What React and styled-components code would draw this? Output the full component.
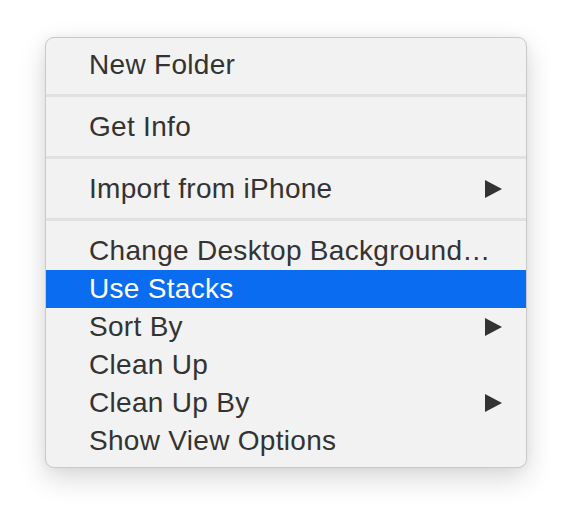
import styled, { createGlobalStyle } from "styled-components";

const GlobalStyle = createGlobalStyle`
  html, body {
    margin: 0;
    background: #ffffff;
  }
`;

const sections = [
  [{ label: "New Folder" }],
  [{ label: "Get Info" }],
  [{ label: "Import from iPhone", submenu: true }],
  [
    { label: "Change Desktop Background…" },
    { label: "Use Stacks", active: true },
    { label: "Sort By", submenu: true },
    { label: "Clean Up" },
    { label: "Clean Up By", submenu: true },
    { label: "Show View Options" },
  ],
];

const App = () => {
  return (
    <>
      <GlobalStyle />
      <Page>
        <Menu>
          {sections.map((items, i) => (
            <Section key={i}>
              {i > 0 && <Separator />}
              {items.map((item) => (
                <Item key={item.label} $active={item.active}>
                  <span>{item.label}</span>
                  {item.submenu && <Arrow />}
                </Item>
              ))}
            </Section>
          ))}
        </Menu>
      </Page>
    </>
  );
};

const Page = styled.div`
  width: 572px;
  height: 522px;
  padding: 37px 0 0 45px;
  box-sizing: border-box;
`;

const Menu = styled.div`
  width: 482px;
  box-sizing: border-box;
  padding: 8px 0 7px;
  background: #f2f2f2;
  border: 1px solid #c9c9c9;
  border-radius: 9px;
  overflow: hidden;
  box-shadow: 0 10px 28px rgba(0, 0, 0, 0.16), 0 0 10px rgba(0, 0, 0, 0.05);
  font-family: "Liberation Sans", Arial, sans-serif;
`;

const Section = styled.div`
  display: flex;
  flex-direction: column;
`;

const Separator = styled.div`
  height: 3px;
  margin: 10px 0 11px;
  background: #e1e1e1;
`;

const Item = styled.div`
  display: flex;
  align-items: center;
  justify-content: space-between;
  height: 38px;
  padding: 0 24px 0 43px;
  font-size: 28px;
  letter-spacing: 0.3px;
  color: ${(p) => (p.$active ? "#ffffff" : "#333333")};
  background: ${(p) => (p.$active ? "#0a6cf0" : "transparent")};
`;

const Arrow = styled.span`
  width: 0;
  height: 0;
  border-top: 9.5px solid transparent;
  border-bottom: 9.5px solid transparent;
  border-left: 17px solid #333333;
`;

export default App;
